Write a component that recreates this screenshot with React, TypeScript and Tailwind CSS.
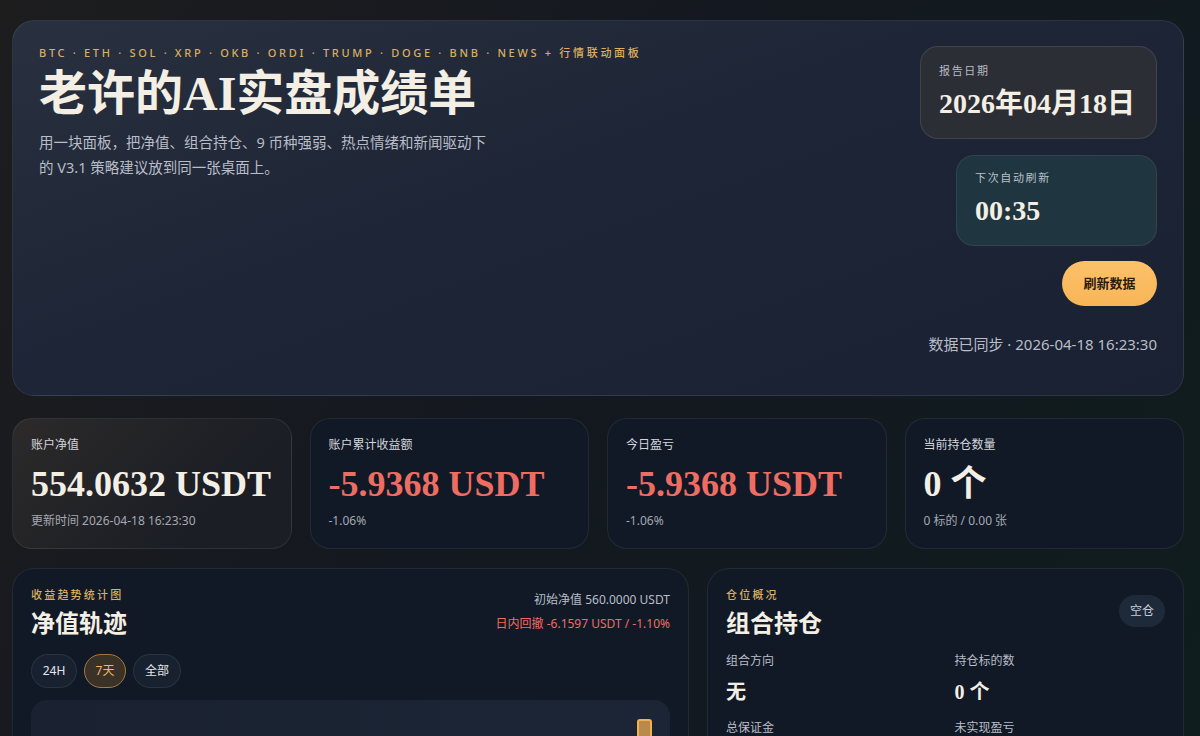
import React from 'react'

const sans = "font-['Noto_Sans','Noto_Sans_CJK_SC',sans-serif]"
const serif = "font-['Liberation_Serif','Noto_Sans_CJK_SC',serif]"

function StatCard({
  label,
  value,
  sub,
  tone = 'light',
  warm = false
}: {
  label: string
  value: string
  sub: string
  tone?: 'light' | 'red'
  warm?: boolean
}) {
  return (
    <div
      className={`h-[131px] rounded-[20px] border border-white/[0.07] px-[18px] pt-[17px] ${
        warm
          ? 'bg-[linear-gradient(135deg,#2c2a29,#1b1e25_70%)]'
          : 'bg-[#111926]'
      }`}
    >
      <div className="text-[12px] text-[#d4d6dc]">{label}</div>
      <div
        className={`${serif} mt-[10px] text-[36px] font-bold leading-[40px] ${
          tone === 'red' ? 'text-[#ee6d63]' : 'text-[#f4efe4]'
        }`}
      >
        {value}
      </div>
      <div className="mt-[8px] text-[12px] text-[#a4a8b2]">{sub}</div>
    </div>
  )
}

export default function App() {
  return (
    <div
      className={`${sans} min-h-[736px] w-full overflow-hidden bg-[linear-gradient(120deg,#1d1d1e_0%,#141820_45%,#0f1d1d_100%)] pl-[12px] pr-[16px] pt-[20px] text-white`}
    >
      {/* hero */}
      <section className="flex h-[376px] justify-between rounded-[22px] border border-white/[0.08] bg-[linear-gradient(160deg,#29303f_0%,#1d2536_45%,#1a2132_100%)] px-[26px] pt-[25px]">
        <div className="flex flex-col">
          <div className="text-[11px] font-medium leading-[14px] tracking-[0.245em] text-[#dcae5f]">
            BTC · ETH · SOL · XRP · OKB · ORDI · TRUMP · DOGE · BNB · NEWS + 行情联动面板
          </div>
          <h1 className={`${serif} mt-[4px] text-[48px] font-semibold leading-[60px] text-[#f4efe4]`}>
            老许的AI实盘成绩单
          </h1>
          <p className="mt-[6px] w-[455px] text-[14.5px] leading-[25px] text-[#b9bdc7]">
            用一块面板，把净值、组合持仓、9 币种强弱、热点情绪和新闻驱动下的 V3.1 策略建议放到同一张桌面上。
          </p>
        </div>
        <div className="flex flex-col items-end">
          <div className="h-[93px] w-[237px] rounded-[18px] border border-white/[0.1] bg-[#2c2e35] px-[18px] pt-[16px]">
            <div className="text-[11px] tracking-[0.15em] text-[#b8bac2]">报告日期</div>
            <div className={`${serif} mt-[7px] text-[28px] font-bold leading-[34px] text-[#f4efe4]`}>
              2026年04月18日
            </div>
          </div>
          <div className="mt-[16px] h-[91px] w-[201px] rounded-[18px] border border-white/[0.08] bg-[#1f3540] px-[18px] pt-[14px]">
            <div className="text-[11px] tracking-[0.15em] text-[#b8c2c8]">下次自动刷新</div>
            <div className={`${serif} mt-[7px] text-[28px] font-bold leading-[34px] text-[#f4efe4]`}>
              00:35
            </div>
          </div>
          <button className="mt-[15px] h-[45px] w-[95px] rounded-full bg-[linear-gradient(180deg,#fdc16a,#f7b556)] text-[13px] font-bold text-[#2a1d0c]">
            刷新数据
          </button>
          <div className="mt-[27px] text-[15px] text-[#b9bdc7]">
            数据已同步 · 2026-04-18 16:23:30
          </div>
        </div>
      </section>

      {/* stats */}
      <div className="mt-[22px] grid grid-cols-4 gap-[18px]">
        <StatCard warm label="账户净值" value="554.0632 USDT" sub="更新时间 2026-04-18 16:23:30" />
        <StatCard label="账户累计收益额" value="-5.9368 USDT" sub="-1.06%" tone="red" />
        <StatCard label="今日盈亏" value="-5.9368 USDT" sub="-1.06%" tone="red" />
        <StatCard label="当前持仓数量" value="0 个" sub="0 标的 / 0.00 张" />
      </div>

      {/* lower panels */}
      <div className="mt-[19px] grid grid-cols-[1fr_477px] gap-[18px]">
        <section className="h-[200px] rounded-[22px] border border-white/[0.07] bg-[#111926] px-[18px] pt-[18px]">
          <div className="flex justify-between">
            <div>
              <div className="text-[11px] font-medium tracking-[0.2em] text-[#dcae5f]">收益趋势统计图</div>
              <div className={`${serif} mt-[4px] text-[24px] font-semibold leading-[32px] text-[#f4efe4]`}>
                净值轨迹
              </div>
            </div>
            <div className="flex flex-col items-end pt-[4px] text-[12px]">
              <div className="text-[#b9bdc7]">初始净值 560.0000 USDT</div>
              <div className="mt-[6px] text-[#ee6d63]">日内回撤 -6.1597 USDT / -1.10%</div>
            </div>
          </div>
          <div className="mt-[14px] flex gap-[7px] text-[12px]">
            <span className="flex h-[34px] w-[46px] items-center justify-center rounded-full border border-white/[0.08] bg-[#182130] text-[#e5e7eb]">
              24H
            </span>
            <span className="flex h-[34px] w-[42px] items-center justify-center rounded-full border border-[#a07a45] bg-[#3a3127] text-[#f2b660]">
              7天
            </span>
            <span className="flex h-[34px] w-[48px] items-center justify-center rounded-full border border-white/[0.08] bg-[#182130] text-[#e5e7eb]">
              全部
            </span>
          </div>
          <div className="relative mt-[12px] h-[80px] rounded-[16px] bg-[linear-gradient(90deg,#1a2231,#1c2536)]">
            <div className="absolute left-[606px] top-[19px] h-[60px] w-[15px] rounded-t-[3px] border-2 border-[#f6b04a] bg-[#b88a4e]" />
          </div>
        </section>

        <section className="h-[200px] rounded-[22px] border border-white/[0.07] bg-[#111926] px-[18px] pt-[18px]">
          <div className="flex justify-between">
            <div>
              <div className="text-[11px] font-medium tracking-[0.2em] text-[#dcae5f]">仓位概况</div>
              <div className={`${serif} mt-[4px] text-[24px] font-semibold leading-[32px] text-[#f4efe4]`}>
                组合持仓
              </div>
            </div>
            <span className="mt-[8px] flex h-[32px] w-[46px] items-center justify-center rounded-full bg-[#1e2a39] text-[12px] text-[#c9ced8]">
              空仓
            </span>
          </div>
          <div className="mt-[12px] grid grid-cols-2">
            <div>
              <div className="text-[12px] text-[#b9bdc7]">组合方向</div>
              <div className={`${serif} mt-[9px] text-[20px] font-bold leading-[26px] text-[#f4efe4]`}>无</div>
            </div>
            <div className="pl-[9px]">
              <div className="text-[12px] text-[#b9bdc7]">持仓标的数</div>
              <div className={`${serif} mt-[9px] text-[20px] font-bold leading-[26px] text-[#f4efe4]`}>0 个</div>
            </div>
            <div className="mt-[14px] text-[12px] text-[#b9bdc7]">总保证金</div>
            <div className="mt-[14px] pl-[9px] text-[12px] text-[#b9bdc7]">未实现盈亏</div>
          </div>
        </section>
      </div>
    </div>
  )
}
